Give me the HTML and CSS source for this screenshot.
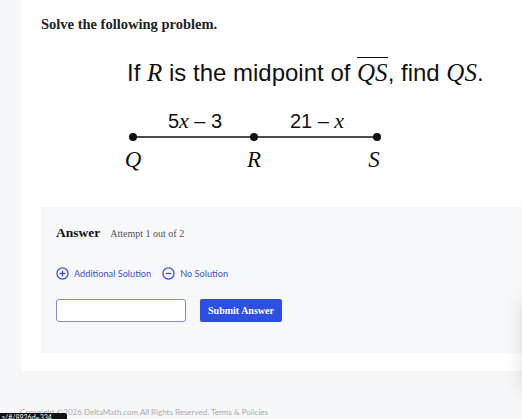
FILE: index.html
```html
<!DOCTYPE html>
<html lang="en">
<head>
  <meta charset="UTF-8" />
  <meta name="viewport" content="width=device-width, initial-scale=1.0"/>
  <title>DeltaMath - Problem</title>
  <link rel="stylesheet" href="styles.css">
</head>
<body>
  <div class="card">
    <h1 class="prompt">Solve the following problem.</h1>

    <div class="problem">
      <p class="sentence">If <i class="var">R</i> is the midpoint of <span class="seg"><i class="var">QS</i></span>, find <i class="var">QS</i>.</p>

      <svg class="diagram" width="280" height="75" viewBox="0 0 280 75">
        <line x1="18" y1="34" x2="262" y2="34" stroke="#111" stroke-width="1.6"/>
        <circle cx="18" cy="34" r="4" fill="#111"/>
        <circle cx="139" cy="34" r="4" fill="#111"/>
        <circle cx="262" cy="34" r="4" fill="#111"/>
        <text class="len" x="80" y="25" text-anchor="middle">5<tspan class="ivar">x</tspan> – 3</text>
        <text class="len" x="202" y="25" text-anchor="middle">21 – <tspan class="ivar">x</tspan></text>
        <text class="pt" x="18" y="64" text-anchor="middle">Q</text>
        <text class="pt" x="139" y="64" text-anchor="middle">R</text>
        <text class="pt" x="259" y="64" text-anchor="middle">S</text>
      </svg>
    </div>

    <div class="answer">
      <div class="answer-head">
        <span class="answer-title">Answer</span>
        <span class="attempt">Attempt 1 out of 2</span>
      </div>

      <div class="options">
        <a class="option" href="#">
          <svg width="13" height="13" viewBox="0 0 14 14"><circle cx="7" cy="7" r="6" fill="none" stroke="#3f51c9" stroke-width="1.4"/><path d="M7 4v6M4 7h6" stroke="#3f51c9" stroke-width="1.4"/></svg>
          Additional Solution
        </a>
        <a class="option" href="#">
          <svg width="13" height="13" viewBox="0 0 14 14"><circle cx="7" cy="7" r="6" fill="none" stroke="#3f51c9" stroke-width="1.4"/><path d="M4 7h6" stroke="#3f51c9" stroke-width="1.4"/></svg>
          No Solution
        </a>
      </div>

      <div class="submit-row">
        <input type="text" class="answer-input" />
        <button class="submit">Submit Answer</button>
      </div>
    </div>
  </div>

  <footer class="footer">Copyright ©2026 DeltaMath.com All Rights Reserved. Terms &amp; Policies</footer>

  <div class="side-shadow"></div>
  <div class="status">s/#/8926d=334</div>
</body>
</html>
```

FILE: styles.css
```css
body {
  margin: 0;
  background: #f6f7f9;
  font-family: 'Lato', sans-serif;
  color: #111;
  overflow: hidden;
  height: 419px;
}

.card {
  background: #fff;
  margin-left: 21px;
  width: 540px;
  padding: 15px 0 18px 20px;
  box-sizing: border-box;
}

.prompt {
  font-family: 'Liberation Serif', serif;
  font-size: 14.5px;
  line-height: 18px;
  font-weight: bold;
  margin: 0;
  color: #222;
}

.problem {
  margin-left: 86px;
  margin-top: 25px;
}

.sentence {
  font-family: 'Liberation Sans', sans-serif;
  font-size: 24px;
  line-height: 30px;
  margin: 0;
  color: #111;
}

.var {
  font-family: 'Liberation Serif', serif;
  font-style: italic;
  font-size: 25px;
}

.seg {
  border-top: 1.5px solid #111;
  padding-top: 1px;
}

.diagram {
  display: block;
  margin-top: 15px;
  margin-left: -12px;
}

.len {
  font-family: 'Liberation Sans', sans-serif;
  font-size: 20px;
  fill: #111;
}

.ivar {
  font-family: 'Liberation Serif', serif;
  font-style: italic;
  font-size: 22px;
}

.pt {
  font-family: 'Liberation Serif', serif;
  font-style: italic;
  font-size: 23px;
  fill: #111;
}

.answer {
  margin-top: 29px;
  background: #f7f8fa;
  padding: 18px 0 31px 15px;
}

.answer-head {
  display: flex;
  align-items: baseline;
  gap: 10px;
}

.answer-title {
  font-family: 'Liberation Serif', serif;
  font-weight: bold;
  font-size: 13.5px;
}

.attempt {
  font-family: 'Liberation Serif', serif;
  font-size: 10px;
  color: #555;
}

.options {
  display: flex;
  gap: 11px;
  margin-top: 26px;
}

.option {
  display: flex;
  align-items: center;
  gap: 5px;
  color: #3f51c9;
  text-decoration: none;
  font-size: 9.2px;
}

.submit-row {
  display: flex;
  gap: 14px;
  margin-top: 19px;
}

.answer-input {
  width: 130px;
  height: 23px;
  box-sizing: border-box;
  border: 1.5px solid #8589cc;
  border-radius: 3px;
  background: #fff;
}

.submit {
  width: 82px;
  height: 23px;
  border: none;
  border-radius: 2px;
  background: #2d4fe3;
  color: #fff;
  font-family: 'Liberation Serif', serif;
  font-weight: bold;
  font-size: 10px;
  padding: 0;
}

.footer {
  margin: 36px 0 0 20px;
  font-size: 8px;
  color: #aaa;
}

.side-shadow {
  position: absolute;
  right: -60px;
  top: 300px;
  width: 60px;
  height: 90px;
  box-shadow: 0 0 18px rgba(0,0,0,0.12);
}

.status {
  position: absolute;
  left: 0;
  bottom: 0;
  width: 67px;
  height: 6px;
  overflow: hidden;
  background: #111;
  color: #fff;
  font-size: 7px;
  line-height: 9px;
  padding-left: 2px;
  border-top-right-radius: 2px;
  box-sizing: border-box;
}
```
